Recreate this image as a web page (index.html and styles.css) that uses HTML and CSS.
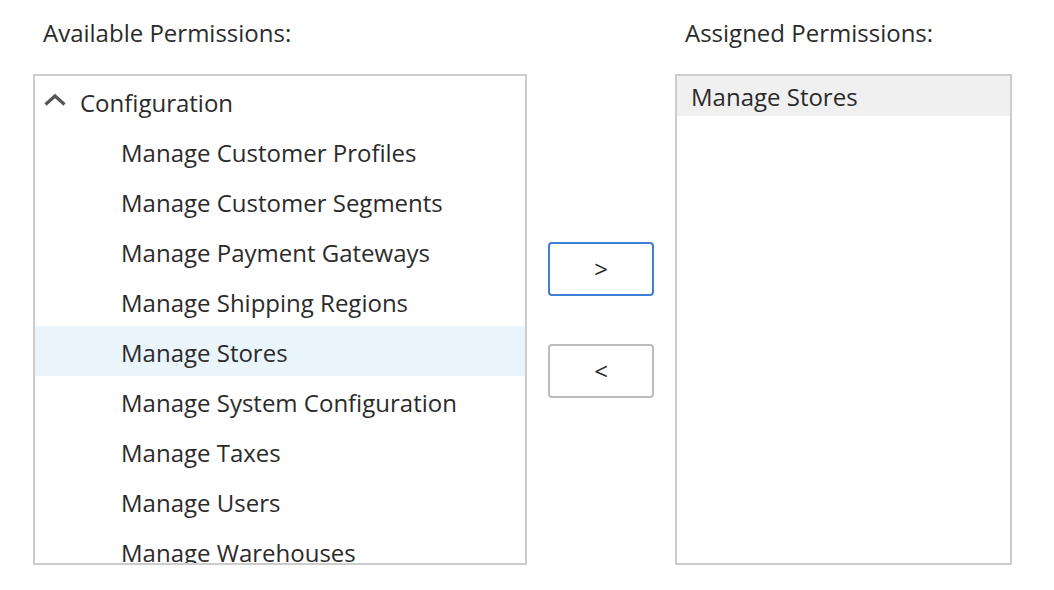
FILE: index.html
```html
<!DOCTYPE html>
<html>
<head>
<meta charset="utf-8">
<link rel="stylesheet" href="styles.css">
</head>
<body>
<div class="picker">
  <div class="label">Available Permissions:</div>
  <div class="spacer"></div>
  <div class="label">Assigned Permissions:</div>

  <div class="box">
    <div class="row group">
      <svg class="chev" width="22" height="14" viewBox="0 0 22 14"><path d="M1.5 11.5 L11 3 L20.5 11.5" fill="none" stroke="#555" stroke-width="3.2"/></svg>
      <span>Configuration</span>
    </div>
    <div class="row item">Manage Customer Profiles</div>
    <div class="row item">Manage Customer Segments</div>
    <div class="row item">Manage Payment Gateways</div>
    <div class="row item">Manage Shipping Regions</div>
    <div class="row item hover">Manage Stores</div>
    <div class="row item">Manage System Configuration</div>
    <div class="row item">Manage Taxes</div>
    <div class="row item">Manage Users</div>
    <div class="row item">Manage Warehouses</div>
  </div>

  <div class="actions">
    <button class="btn primary">&gt;</button>
    <button class="btn">&lt;</button>
  </div>

  <div class="box right">
    <div class="sel">Manage Stores</div>
  </div>
</div>
</body>
</html>
```
FILE: styles.css
```css
html, body {
  margin: 0;
  padding: 0;
  background: #fff;
}
body {
  font-family: "Open Sans", "Noto Sans", sans-serif;
  color: #2b2b2b;
}
.picker {
  display: grid;
  grid-template-columns: 494px 148px 337px;
  grid-template-rows: 57px 491px;
  padding: 17px 0 0 33px;
}
.label {
  font-size: 24px;
  line-height: 32px;
  padding-left: 10px;
}
.box {
  border: 2px solid #ccc;
  overflow: hidden;
  box-sizing: border-box;
}
.row {
  height: 50px;
  display: flex;
  align-items: center;
  font-size: 24px;
  white-space: nowrap;
}
.group {
  padding-left: 9px;
  padding-top: 2px;
  box-sizing: border-box;
}
.chev {
  margin-right: 14px;
  margin-top: -4px;
}
.item {
  padding-left: 86px;
  padding-top: 2px;
  box-sizing: border-box;
}
.hover {
  background: #eaf4fb;
}
.actions {
  display: flex;
  flex-direction: column;
  align-items: center;
  justify-content: center;
  gap: 48px;
}
.btn {
  width: 106px;
  height: 54px;
  border: 2px solid #bbb;
  border-radius: 4px;
  background: #fff;
  font-family: "Open Sans", "Noto Sans", sans-serif;
  font-size: 24px;
  color: #2b2b2b;
  padding: 0;
}
.btn.primary {
  border-color: #3f7fd3;
}
.sel {
  height: 40px;
  background: #f0f0f0;
  font-size: 24px;
  display: flex;
  align-items: center;
  padding-left: 14px;
}
```
